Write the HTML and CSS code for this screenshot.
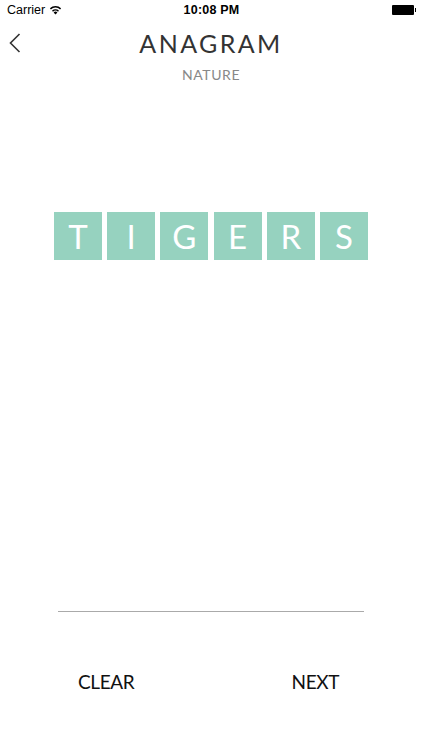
FILE: index.html
```html
<!DOCTYPE html>
<html>
<head>
<meta charset="utf-8">
<link rel="stylesheet" href="styles.css">
</head>
<body>
<div class="screen">
  <div class="status">
    <div class="status-left">
      <span>Carrier</span>
      <svg class="wifi" width="13" height="10" viewBox="0 0 13 10">
        <path d="M6.5 9.6 L4.6 7.4 A2.8 2.8 0 0 1 8.4 7.4 Z" fill="#000"/>
        <path d="M3.5 6.2 A4.4 4.4 0 0 1 9.5 6.2" stroke="#000" stroke-width="1.5" fill="none"/>
        <path d="M1.4 3.9 A7.4 7.4 0 0 1 11.6 3.9" stroke="#000" stroke-width="1.5" fill="none"/>
      </svg>
    </div>
    <div class="status-time">10:08 PM</div>
    <div class="status-right">
      <span class="battery"></span><span class="battery-tip"></span>
    </div>
  </div>

  <div class="nav">
    <div class="back">
      <svg width="12" height="20" viewBox="0 0 12 20">
        <path d="M10.5 1 L1.5 10 L10.5 19" stroke="#333" stroke-width="1.6" fill="none"/>
      </svg>
    </div>
    <div class="title">ANAGRAM</div>
    <div></div>
  </div>
  <div class="subtitle">NATURE</div>

  <div class="tiles">
    <div class="tile">T</div>
    <div class="tile">I</div>
    <div class="tile">G</div>
    <div class="tile">E</div>
    <div class="tile">R</div>
    <div class="tile">S</div>
  </div>

  <div class="spacer"></div>

  <div class="answer-line"></div>

  <div class="actions">
    <button class="action">CLEAR</button>
    <button class="action">NEXT</button>
  </div>
</div>
</body>
</html>
```
FILE: styles.css
```css
html, body {
  margin: 0;
  padding: 0;
  background: #fff;
}
.screen {
  width: 422px;
  height: 750px;
  display: flex;
  flex-direction: column;
  font-family: "Lato", "Open Sans", sans-serif;
  overflow: hidden;
}
.status {
  height: 20px;
  display: grid;
  grid-template-columns: 1fr auto 1fr;
  align-items: center;
  padding: 0 6px 0 7px;
  font-family: "Liberation Sans", Arial, sans-serif;
  font-size: 12.5px;
  color: #000;
}
.status-left {
  display: flex;
  align-items: center;
  gap: 4px;
}
.wifi {
  margin-top: -1px;
}
.status-time {
  font-weight: bold;
  text-align: center;
  letter-spacing: 0.2px;
}
.status-right {
  display: flex;
  justify-content: flex-end;
  align-items: center;
}
.battery {
  width: 22px;
  height: 10px;
  background: #000;
  border-radius: 1px;
}
.battery-tip {
  width: 1.5px;
  height: 4px;
  background: #000;
  margin-left: 1px;
}
.nav {
  height: 46px;
  display: grid;
  grid-template-columns: 44px 1fr 44px;
  align-items: center;
}
.back {
  padding-left: 9px;
  display: flex;
  align-items: center;
}
.title {
  text-align: center;
  font-size: 25px;
  font-weight: 400;
  color: #333;
  letter-spacing: 2.4px;
  line-height: 30px;
}
.subtitle {
  text-align: center;
  font-size: 14px;
  color: #888;
  letter-spacing: 0.6px;
  line-height: 16px;
  margin-top: 1px;
}
.tiles {
  margin-top: 129px;
  display: flex;
  justify-content: center;
  gap: 5.2px;
}
.tile {
  width: 48px;
  height: 48px;
  background: #96d2bf;
  color: #fff;
  font-size: 33px;
  font-weight: 400;
  display: flex;
  align-items: center;
  justify-content: center;
  line-height: 1;
}
.spacer {
  flex: 1;
}
.answer-line {
  height: 1px;
  background: #aaa;
  margin: 0 58px;
}
.actions {
  height: 138px;
  display: flex;
  justify-content: space-between;
  align-items: center;
  padding: 0 83px 0 78px;
}
.action {
  border: none;
  background: none;
  padding: 0;
  font-family: "Lato", sans-serif;
  font-size: 19px;
  font-weight: 400;
  color: #111;
  letter-spacing: -0.4px;
}
```
